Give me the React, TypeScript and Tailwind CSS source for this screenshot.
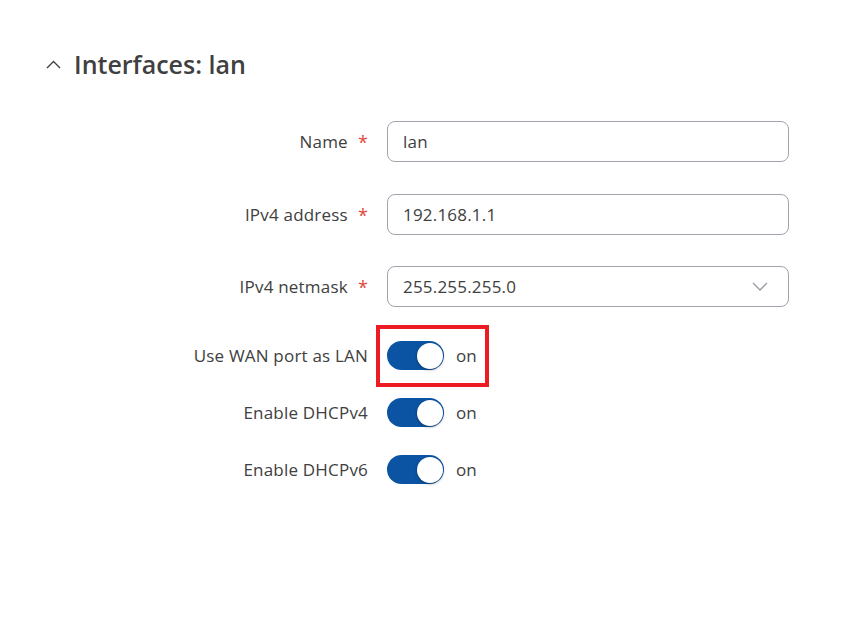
import { useState } from "react"

const font = { fontFamily: '"Open Sans", "Noto Sans", sans-serif' }

const Toggle = ({ on, onChange }: { on: boolean; onChange: () => void }) => (
  <button
    onClick={onChange}
    className={`relative w-[57px] h-[29px] rounded-full ${on ? "bg-[#0a54a3]" : "bg-[#c9c9cf]"}`}
  >
    <span
      className={`absolute top-[1.5px] w-[26px] h-[26px] rounded-full bg-white shadow-[0_1px_3px_rgba(0,0,0,0.35)] ${
        on ? "left-[29.5px]" : "left-[1.5px]"
      }`}
    />
  </button>
)

const Label = ({ text, required }: { text: string; required?: boolean }) => (
  <div className="flex items-center justify-end text-[17px] tracking-[0.2px] text-[#404040]">
    <span>{text}</span>
    {required && <span className="ml-[10px] text-[#e2483b] text-[18px] leading-none">*</span>}
  </div>
)

const App = () => {
  const [wan, setWan] = useState(true)
  const [dhcp4, setDhcp4] = useState(true)
  const [dhcp6, setDhcp6] = useState(true)

  const toggles = [
    { label: "Use WAN port as LAN", value: wan, set: () => setWan(!wan), boxed: true },
    { label: "Enable DHCPv4", value: dhcp4, set: () => setDhcp4(!dhcp4) },
    { label: "Enable DHCPv6", value: dhcp6, set: () => setDhcp6(!dhcp6) },
  ]

  return (
    <div className="w-[844px] h-[630px] bg-white pl-[46px] pt-[48px]" style={font}>
      <div className="flex items-center gap-[13px] h-[32px]">
        <svg width="15" height="9" viewBox="0 0 15 9" fill="none" stroke="#404040" strokeWidth="1.4">
          <polyline points="1,8 7.5,1.5 14,8" />
        </svg>
        <h2 className="text-[25px] font-semibold text-[#404040] leading-[32px]">Interfaces: lan</h2>
      </div>

      <div className="mt-[41px] grid grid-cols-[322px_402px] gap-x-[19px]">
        <Label text="Name" required />
        <input
          defaultValue="lan"
          className="h-[41px] rounded-[8px] border border-[#a3a3ad] px-[15px] text-[17px] tracking-[0.2px] text-[#404040] outline-none"
        />

        <div className="col-span-2 h-[32px]" />
        <Label text="IPv4 address" required />
        <input
          defaultValue="192.168.1.1"
          className="h-[41px] rounded-[8px] border border-[#a3a3ad] px-[15px] text-[17px] tracking-[0.2px] text-[#404040] outline-none"
        />

        <div className="col-span-2 h-[31px]" />
        <Label text="IPv4 netmask" required />
        <div className="h-[41px] rounded-[8px] border border-[#a3a3ad] pl-[15px] pr-[20px] flex items-center justify-between text-[17px] tracking-[0.2px] text-[#404040]">
          <span>255.255.255.0</span>
          <svg width="16" height="9" viewBox="0 0 16 9" fill="none" stroke="#9a9aa2" strokeWidth="1.3">
            <polyline points="1,1 8,8 15,1" />
          </svg>
        </div>

        {toggles.map((t, i) => (
          <div key={t.label} className={`col-span-2 grid grid-cols-subgrid ${i === 0 ? "mt-[20px]" : "mt-[0px]"}`}>
            <div className="flex items-center justify-end text-[17px] tracking-[0.2px] text-[#404040] h-[57px]">{t.label}</div>
            <div className="flex items-center h-[57px]">
              <div
                className={`flex items-center gap-[12px] ${
                  t.boxed ? "-ml-[11px] pl-[7px] pr-[8px] h-[62px] border-[4px] border-[#ed1c24]" : ""
                }`}
              >
                <Toggle on={t.value} onChange={t.set} />
                <span className="text-[17px] text-[#404040]">{t.value ? "on" : "off"}</span>
              </div>
            </div>
          </div>
        ))}
      </div>
    </div>
  )
}

export default App
